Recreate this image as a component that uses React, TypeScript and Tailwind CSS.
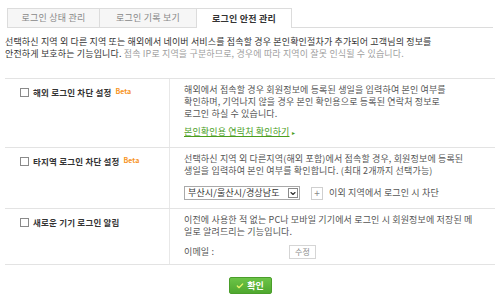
import { Check, ChevronDown } from 'lucide-react';

const font = { fontFamily: '"Noto Sans CJK KR", "Noto Sans", sans-serif' };

function Row({
  title,
  beta,
  children,
}: {
  title: string;
  beta?: boolean;
  children: React.ReactNode;
}) {
  return (
    <div className="flex border-b border-[#e3e3e3]">
      <div className="flex w-[165px] shrink-0 items-start gap-[4px] border-r border-[#e8e8e8] pl-[15px] pt-[7px]">
        <span className="mt-[2px] h-[9px] w-[9px] shrink-0 border border-[#8a8a8a] bg-white" />
        <span className="text-[8.5px] font-bold leading-[12px] tracking-[0.2px] text-[#333]">
          {title}
        </span>
        {beta && (
          <span className="-mt-[1px] text-[7px] font-bold leading-[12px] text-[#f7931e]">
            Beta
          </span>
        )}
      </div>
      <div className="flex-1 whitespace-nowrap pl-[14px] pt-[5px] text-[9px] leading-[12px] tracking-[0.15px] text-[#555]">
        {children}
      </div>
    </div>
  );
}

export default function App() {
  return (
    <div className="h-[298px] w-[500px] overflow-hidden bg-white" style={font}>
      {/* Tabs */}
      <div className="flex pl-[7px] pr-[7px] pt-[8px]">
        <div className="flex h-[20px] w-[93px] items-center justify-center border border-[#dcdcdc] bg-[#f6f6f6] text-[9px] tracking-[0.2px] text-[#888]">
          로그인 상태 관리
        </div>
        <div className="flex h-[20px] w-[97px] items-center justify-center border border-l-0 border-[#dcdcdc] bg-[#f6f6f6] text-[9px] tracking-[0.2px] text-[#888]">
          로그인 기록 보기
        </div>
        <div className="flex h-[20px] w-[95px] items-center justify-center border border-b-0 border-l-0 border-[#dcdcdc] bg-white text-[9px] font-bold tracking-[0.2px] text-[#333]">
          로그인 안전 관리
        </div>
        <div className="flex-1 border-b border-[#dcdcdc]" />
      </div>

      {/* Intro */}
      <div className="whitespace-nowrap px-[5px] pt-[8px] text-[9px] leading-[12px] tracking-[0.15px] text-[#333]">
        <p>
          선택하신 지역 외 다른 지역 또는 해외에서 네이버 서비스를 접속할 경우 본인확인절차가 추가되어 고객님의 정보를
        </p>
        <p>
          안전하게 보호하는 기능입니다.{' '}
          <span className="text-[#a0a0a0]">
            접속 IP로 지역을 구분하므로, 경우에 따라 지역이 잘못 인식될 수 있습니다.
          </span>
        </p>
      </div>

      {/* Settings table */}
      <div className="mx-[5px] mt-[18px] border-t border-[#e3e3e3]">
        <Row title="해외 로그인 차단 설정" beta>
          <div className="pb-[8px]">
            <p>해외에서 접속할 경우 회원정보에 등록된 생일을 입력하여 본인 여부를</p>
            <p>확인하며, 기억나지 않을 경우 본인 확인용으로 등록된 연락처 정보로</p>
            <p>로그인 하실 수 있습니다.</p>
            <p className="mt-[6px] text-[#4a9e1e]">
              <span className="underline">본인확인용 연락처 확인하기</span>
              <span className="ml-[2px] text-[6px]">▸</span>
            </p>
          </div>
        </Row>
        <Row title="타지역 로그인 차단 설정" beta>
          <div className="pb-[8px]">
            <p>선택하신 지역 외 다른지역(해외 포함)에서 접속할 경우, 회원정보에 등록된</p>
            <p>생일을 입력하여 본인 여부를 확인합니다. (최대 2개까지 선택가능)</p>
            <div className="mt-[9px] flex items-center">
              <div className="flex h-[14px] w-[116px] items-center justify-between border border-[#a9a9a9] bg-white pl-[3px] pr-[1px]">
                <span className="text-[9px] leading-[12px] text-[#333]">부산시/울산시/경상남도</span>
                <span className="flex h-[10px] w-[10px] items-center justify-center border border-[#8a8a8a]">
                  <ChevronDown size={9} strokeWidth={3.5} className="text-[#333]" />
                </span>
              </div>
              <span className="ml-[11px] flex h-[13px] w-[12px] items-center justify-center border border-[#cfcfcf] bg-white text-[10px] leading-none text-[#888]">
                +
              </span>
              <span className="ml-[6px]">이외 지역에서 로그인 시 차단</span>
            </div>
          </div>
        </Row>
        <Row title="새로운 기기 로그인 알림">
          <div className="pb-[5px]">
            <p>이전에 사용한 적 없는 PC나 모바일 기기에서 로그인 시 회원정보에 저장된 메</p>
            <p>일로 알려드리는 기능입니다.</p>
            <div className="mt-[7px] flex items-center">
              <span className="w-[105px]">이메일 :</span>
              <span className="flex h-[14px] items-center border border-[#d5d5d5] bg-white px-[5px] text-[8px] text-[#888]">
                수정
              </span>
            </div>
          </div>
        </Row>
      </div>

      {/* Confirm */}
      <div className="flex justify-center pt-[12px]">
        <button className="flex h-[17px] w-[43px] items-center justify-center gap-[3px] rounded-[2px] border border-[#4a9e2a] bg-gradient-to-b from-[#6cc447] to-[#4fa82f] text-[9px] font-bold text-white">
          <Check size={8} strokeWidth={4} className="text-[#e6f36a]" />
          확인
        </button>
      </div>
    </div>
  );
}
